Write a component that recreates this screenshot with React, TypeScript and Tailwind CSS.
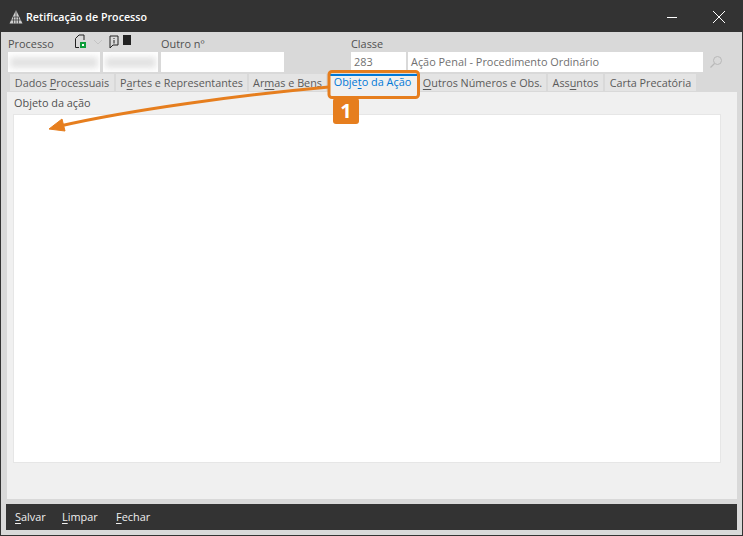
import React from 'react';

const font = { fontFamily: '"Open Sans", "Noto Sans", sans-serif' };

const Tab = ({ w, children, active }: { w: string; children: React.ReactNode; active?: boolean }) => (
  <div
    className={`${w} flex items-center justify-center whitespace-pre ${
      active ? 'h-[18px] bg-[#f0f0f0] text-[#0078d7] border-t-2 border-[#0078d7] pb-[3px]' : 'h-[17px] mb-[1px] pt-[1px] bg-[#e4e4e4] text-[#5a5a5a] text-[10.8px]'
    }`}
  >
    <span>{children}</span>
  </div>
);

const Field = ({ w, children, className = '' }: { w: string; children?: React.ReactNode; className?: string }) => (
  <div className={`${w} h-[20px] bg-white pl-[3px] flex items-center text-[#707070] ${className}`}>{children}</div>
);

const Ul = ({ children }: { children: React.ReactNode }) => <span className="underline underline-offset-2">{children}</span>;

export default function App() {
  return (
    <div className="relative w-[743px] h-[536px] bg-[#d9d9d9] border border-[#333333] flex flex-col overflow-hidden text-[10.9px] leading-none" style={font}>
      <div className="h-[31px] shrink-0 bg-[#333333] flex items-center pl-[7px] text-white">
        <svg width="16" height="16" viewBox="0 0 16 16" className="mr-[2px]">
          <path d="M8 1 L14.5 14.5 H1.5 Z" fill="#d0d0d0" />
          <path d="M8 1 V14.5 M5.5 8 V14.5 M10.5 8 V14.5 M3 11 H13 M5 8 H11" stroke="#333333" strokeWidth="0.7" fill="none" />
        </svg>
        <span className="font-semibold text-[10.7px] pt-[1px]">Retificação de Processo</span>
        <div className="ml-auto flex items-center">
          <svg width="12" height="12" viewBox="0 0 12 12" className="mr-[34px]">
            <path d="M1 6.5 H11" stroke="#ffffff" strokeWidth="1" />
          </svg>
          <svg width="14" height="14" viewBox="0 0 14 14" className="mr-[16px]">
            <path d="M1 1 L13 13 M13 1 L1 13" stroke="#ffffff" strokeWidth="1" />
          </svg>
        </div>
      </div>

      <div className="h-[42px] shrink-0 flex pl-[7px] pt-[3px] text-[#505050]">
        <div className="w-[153px]">
          <div className="h-[17px] flex items-end">
            <span className="w-[66px] pb-[2px]">Processo</span>
            <svg width="14" height="15" viewBox="0 0 14 15" className="mb-[3px]">
              <path d="M1.5 13.5 V4.5 L5 1 H10 V6" stroke="#222222" strokeWidth="1" fill="none" />
              <path d="M1.5 13.5 H5" stroke="#222222" strokeWidth="1" />
              <rect x="6" y="8" width="6" height="6" fill="#0f9d3a" />
              <rect x="8" y="10" width="2" height="2" fill="#ffffff" />
            </svg>
            <svg width="10" height="6" viewBox="0 0 10 6" className="ml-[5px] mb-[7px]">
              <path d="M1 1 L5 5 L9 1" stroke="#c4c4c4" strokeWidth="1" fill="none" />
            </svg>
            <svg width="10" height="14" viewBox="0 0 10 14" className="ml-[6px] mb-[3px]">
              <path d="M1 1 H9 V10 H4 L1 13 Z" stroke="#222222" strokeWidth="1" fill="none" />
              <path d="M5 3 V4 M5 5 V8.5" stroke="#222222" strokeWidth="1" />
            </svg>
            <div className="w-[8px] h-[10px] bg-[#222222] ml-[4px] mb-[7px]" />
          </div>
          <div className="flex gap-[3px]">
            <div className="h-[20px] w-[92px] bg-white overflow-hidden flex items-center px-[2px]">
              <div className="w-full h-[11px] bg-[#e2e2e2] blur-[3px]" />
            </div>
            <div className="h-[20px] w-[55px] bg-white overflow-hidden flex items-center px-[2px]">
              <div className="w-full h-[11px] bg-[#e2e2e2] blur-[3px]" />
            </div>
          </div>
        </div>
        <div className="w-[190px]">
          <div className="h-[17px] flex items-end pb-[2px]">Outro nº</div>
          <Field w="w-[123px]" />
        </div>
        <div>
          <div className="h-[17px] flex items-end pb-[2px]">Classe</div>
          <div className="flex items-center">
            <Field w="w-[55px]" className="mr-[2px]">283</Field>
            <Field w="w-[295px]">Ação Penal - Procedimento Ordinário</Field>
            <svg width="14" height="14" viewBox="0 0 14 14" className="ml-[6px]">
              <circle cx="8.5" cy="5.5" r="4" stroke="#b8b8b8" strokeWidth="1" fill="none" />
              <path d="M5.5 8.5 L1.5 12.5" stroke="#b8b8b8" strokeWidth="1.2" />
            </svg>
          </div>
        </div>
      </div>

      <div className="h-[18px] shrink-0 flex items-end gap-[2px] pl-[9px]">
        <Tab w="w-[104px]">Dados <Ul>P</Ul>rocessuais</Tab>
        <Tab w="w-[131px]">P<Ul>a</Ul>rtes e Representantes</Tab>
        <Tab w="w-[77px]">Ar<Ul>m</Ul>as e Bens</Tab>
        <Tab w="w-[89px]" active>Obje<Ul>t</Ul>o da Ação</Tab>
        <Tab w="w-[127px]"><Ul>O</Ul>utros Números e Obs.</Tab>
        <Tab w="w-[55px]">Ass<Ul>u</Ul>ntos</Tab>
        <Tab w="w-[91px]">Carta Precatória</Tab>
      </div>

      <div className="h-[407px] shrink-0 ml-[6px] mr-[5px] bg-[#f0f0f0] flex flex-col pl-[6px] text-[#505050]">
        <div className="h-[22px] shrink-0 flex items-center pl-[1px] pt-[1px]">Objeto da ação</div>
        <div className="w-[708px] h-[349px] bg-white border border-[#e6e6e6]" />
      </div>

      <div className="h-[26px] shrink-0 mt-[5px] ml-[5px] mr-[5px] bg-[#333333] flex items-center pl-[9px] text-[#f0f0f0]">
        <span className="w-[47px]"><Ul>S</Ul>alvar</span>
        <span className="w-[54px]"><Ul>L</Ul>impar</span>
        <span><Ul>F</Ul>echar</span>
      </div>

      {/* callout */}
      <svg width="743" height="536" viewBox="0 0 743 536" className="absolute left-[-1px] top-[-1px] pointer-events-none">
        <path d="M329 87 C 240 95, 130 110, 60 126" stroke="#e67e1e" strokeWidth="3" fill="none" />
        <path d="M49 129 L62 119 L65 131 Z" fill="#e67e1e" stroke="#e67e1e" strokeWidth="1" />
        <rect x="329" y="71.5" width="89.5" height="26" rx="3" stroke="#e67e1e" strokeWidth="3" fill="none" />
      </svg>
      <div className="absolute left-[332px] top-[97px] w-[26px] h-[26px] bg-[#e67e1e] rounded-[3px] flex items-center justify-center text-white font-bold text-[20px]">1</div>
    </div>
  );
}
